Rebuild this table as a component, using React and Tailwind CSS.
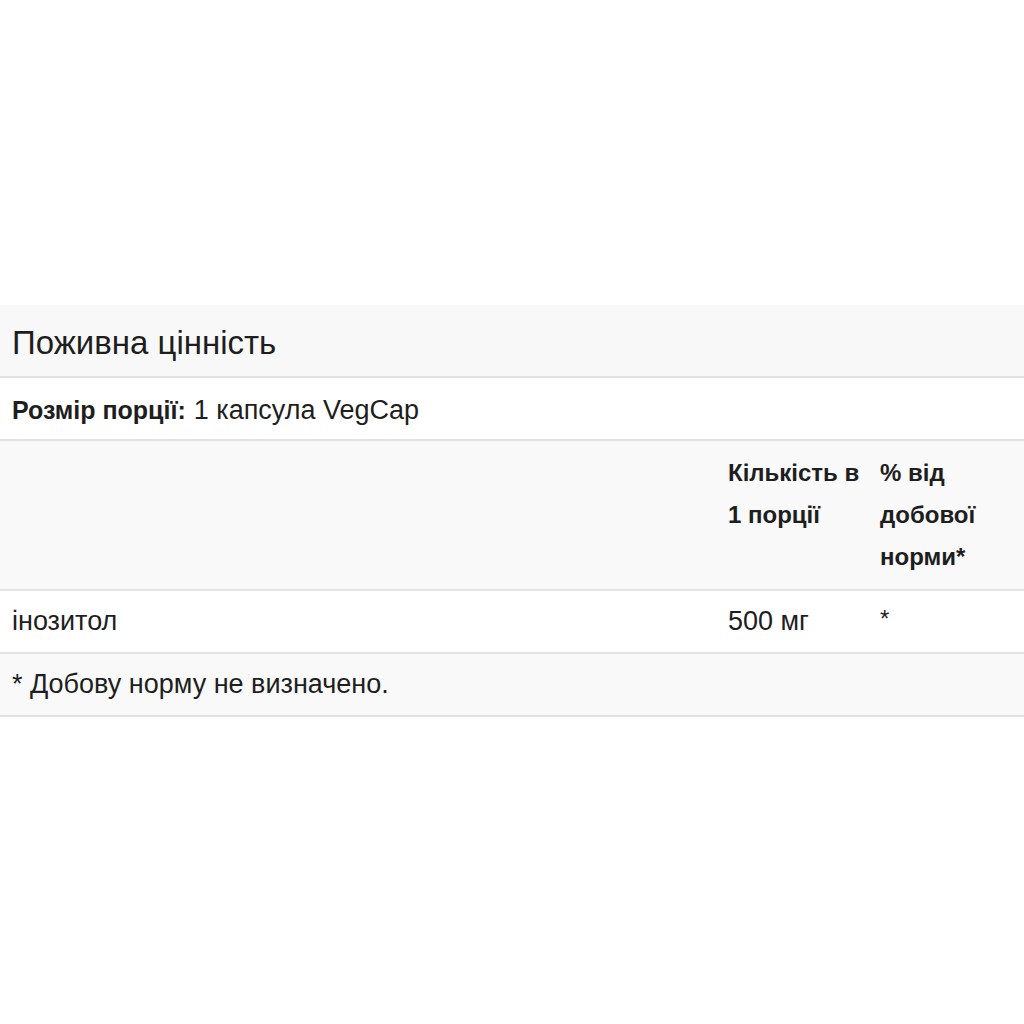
export default function App() {
  return (
    <div className="flex h-[1024px] w-[1024px] flex-col bg-white pt-[305px] text-[#1e1e1e] [font-family:'Liberation_Sans',Arial,sans-serif]">
      <div className="flex h-[73px] items-center border-b-2 border-[#e2e2e2] bg-[#f8f8f8] px-3 pt-1 text-[33px]">
        Поживна цінність
      </div>
      <div className="flex h-[63px] items-center border-b-2 border-[#e2e2e2] bg-white px-3 pt-1 text-[27px]">
        <span className="text-[25px] font-bold">Розмір порції:</span>
        <span className="ml-2">1 капсула VegCap</span>
      </div>
      <div className="grid grid-cols-[716px_152px_156px] border-b-2 border-[#e2e2e2] bg-[#f9f9f9] py-[11px] text-[24px] font-bold leading-[42px]">
        <div />
        <div className="whitespace-nowrap px-3">
          Кількість в
          <br />1 порції
        </div>
        <div className="whitespace-nowrap px-3">
          % від
          <br />
          добової
          <br />
          норми*
        </div>
      </div>
      <div className="grid h-[63px] grid-cols-[716px_152px_156px] items-center border-b-2 border-[#e2e2e2] bg-white text-[27px]">
        <div className="px-3">інозитол</div>
        <div className="px-3">500 мг</div>
        <div className="self-start px-3 pt-[10px] text-[24px]">*</div>
      </div>
      <div className="flex h-[63px] items-center border-b-2 border-[#e2e2e2] bg-[#f9f9f9] px-3 text-[27px]">
        * Добову норму не визначено.
      </div>
    </div>
  );
}
